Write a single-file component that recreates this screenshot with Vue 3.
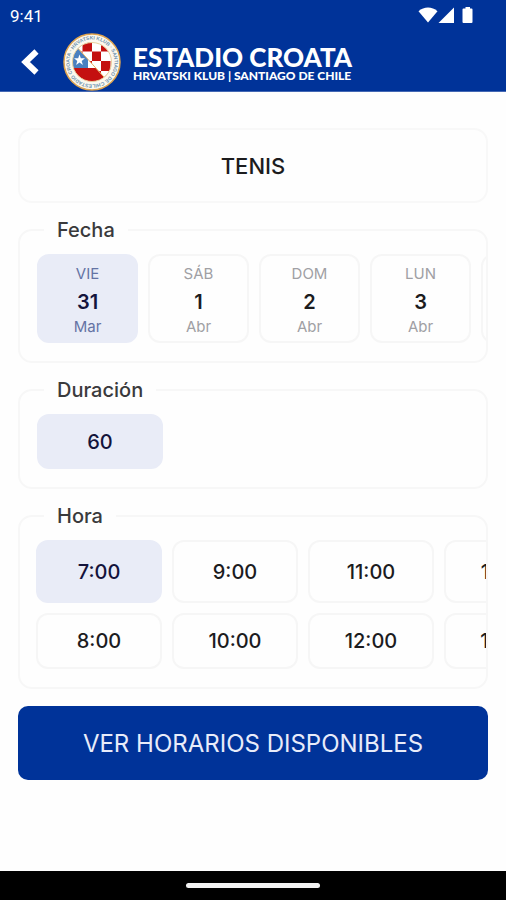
<script setup>
import { ref } from 'vue'

const days = [
  { name: 'VIE', day: '31', month: 'Mar' },
  { name: 'SÁB', day: '1', month: 'Abr' },
  { name: 'DOM', day: '2', month: 'Abr' },
  { name: 'LUN', day: '3', month: 'Abr' },
  { name: 'MAR', day: '4', month: 'Abr' },
]
const durations = ['60']
const hours = ['7:00', '9:00', '11:00', '13:00', '8:00', '10:00', '12:00', '14:00']

const selectedDay = ref('31')
const selectedDuration = ref('60')
const selectedHour = ref('7:00')
</script>

<template>
  <div class="screen">
    <header class="top">
      <div class="status">
        <span class="clock">9:41</span>
        <svg class="status-icons" width="56" height="18" viewBox="0 0 56 18" aria-hidden="true">
          <path d="M.5 4.200C6 -.6 14 -.6 19.500 4.200L10 15.500Z" />
          <path d="M36 .5V16H20.500Z" />
          <path d="M47.500 0h4.500v1.500h1.500q1 0 1 1V15q0 1-1 1h-8q-1 0-1-1V2.500q0-1 1-1h2Z" />
        </svg>
      </div>
      <div class="brand-row">
        <button class="back" type="button" aria-label="Volver">
          <svg width="20" height="28" viewBox="0 0 20 28" aria-hidden="true">
            <path d="M16.500 3.500L5.500 14L16.500 24.500" fill="none" stroke="#fff" stroke-width="6" />
          </svg>
        </button>
        <svg class="crest" width="58" height="58" viewBox="0 0 58 58" aria-hidden="true">
          <defs>
            <clipPath id="disc"><circle cx="29" cy="29" r="19.500" /></clipPath>
            <clipPath id="upper"><path d="M14 6H54V54H50L12 12Z" /></clipPath>
            <path id="ring" d="M29 51.500a22.500 22.500 0 1 1 .1 0" />
          </defs>
          <circle cx="29" cy="29" r="28" fill="#fbf8ee" stroke="#dfa550" stroke-width="1.500" />
          <text class="ring-text"><textPath href="#ring">ESTADIO CROATA · HRVATSKI KLUB · SANTIAGO DE CHILE ·</textPath></text>
          <g clip-path="url(#disc)">
            <rect width="58" height="58" fill="#fff" />
            <path d="M0 35H58V58H0Z" fill="#c41010" />
            <path d="M0 0H25V35H0Z" fill="#4a80c0" />
            <g clip-path="url(#upper)">
              <rect width="58" height="58" fill="#fff" />
              <path d="M19.500 9h9.500v9.500h-9.500zM38 9h9.500v9.500H38zM29 18.500h9v9.500h-9zM10 18.500h9.500v9.500h-9.500zM38 28h9.500v10H38zM19.500 28h9.500v10h-9.500zM29 38h9v9.500h-9z" fill="#c41010" />
            </g>
            <path d="M12 12L50 54" stroke="#e6b566" stroke-width="1" />
            <path d="M16.500 21.500l1.300 3.800h4.200l-3.300 2.600 1.200 4-3.400-2.400-3.400 2.400 1.200-4-3.300-2.600h4.200z" fill="#fff" />
          </g>
          <circle cx="29" cy="29" r="19.500" fill="none" stroke="#e9cf9c" stroke-width="1" />
        </svg>
        <div class="brand">
          <span class="brand-name">ESTADIO CROATA</span>
          <span class="brand-sub">HRVATSKI KLUB | SANTIAGO DE CHILE</span>
        </div>
      </div>
    </header>

    <main class="content">
      <h1 class="sport">TENIS</h1>

      <fieldset class="group">
        <legend>Fecha</legend>
        <div class="scroller days">
          <button
            v-for="d in days"
            :key="d.day"
            type="button"
            class="chip day"
            :class="{ selected: d.day === selectedDay }"
            :aria-pressed="d.day === selectedDay"
            @click="selectedDay = d.day"
          >
            <span class="weekday">{{ d.name }}</span>
            <span class="number">{{ d.day }}</span>
            <span class="month">{{ d.month }}</span>
          </button>
        </div>
      </fieldset>

      <fieldset class="group">
        <legend>Duración</legend>
        <div class="scroller durations">
          <button
            v-for="m in durations"
            :key="m"
            type="button"
            class="chip"
            :class="{ selected: m === selectedDuration }"
            :aria-pressed="m === selectedDuration"
            @click="selectedDuration = m"
          >{{ m }}</button>
        </div>
      </fieldset>

      <fieldset class="group">
        <legend>Hora</legend>
        <div class="scroller hours">
          <button
            v-for="h in hours"
            :key="h"
            type="button"
            class="chip"
            :class="{ selected: h === selectedHour }"
            :aria-pressed="h === selectedHour"
            @click="selectedHour = h"
          >{{ h }}</button>
        </div>
      </fieldset>

      <button class="submit" type="button">VER HORARIOS DISPONIBLES</button>
    </main>

    <footer class="nav-bar"><span class="handle"></span></footer>
  </div>
</template>

<style>
body {
  margin: 0;
  background: #fff;
}
</style>

<style scoped>
* {
  box-sizing: border-box;
}
.screen {
  display: flex;
  flex-direction: column;
  min-height: 100vh;
  background: #fefefe;
  font-family: Inter, "Liberation Sans", sans-serif;
  color: #1c1c1e;
}
button {
  font: inherit;
  color: inherit;
  cursor: pointer;
}
.top {
  background: #003399;
  color: #fff;
  border-bottom: 1px solid #4468b4;
}
.status {
  display: flex;
  justify-content: space-between;
  align-items: center;
  height: 32px;
  padding: 0 32px 0 10px;
}
.clock {
  font-family: Roboto, sans-serif;
  font-size: 17px;
}
.status-icons {
  fill: #fff;
  overflow: visible;
}
.brand-row {
  display: flex;
  align-items: center;
  height: 59px;
  padding-left: 16px;
}
.back {
  display: flex;
  padding: 0 4px;
  border: 0;
  background: none;
}
.crest {
  flex: none;
  margin-left: 19px;
}
.ring-text {
  font-family: "Liberation Sans", sans-serif;
  font-size: 5px;
  font-weight: 700;
  fill: #6d93b0;
}
.brand {
  display: flex;
  flex-direction: column;
  margin-left: 12px;
  padding-top: 2px;
  font-family: Lato, sans-serif;
  font-weight: 900;
  white-space: nowrap;
}
.brand-name {
  font-size: 26px;
  line-height: 26px;
}
.brand-sub {
  font-size: 12px;
  line-height: 12px;
}
.content {
  flex: 1;
  display: flex;
  flex-direction: column;
  gap: 14px;
  padding: 36px 18px 20px;
}
.sport {
  display: flex;
  align-items: center;
  justify-content: center;
  height: 75px;
  margin: 0;
  border: 2px solid #f8f8f8;
  border-radius: 14px;
  font-size: 22px;
  font-weight: 500;
}
.group {
  min-width: 0;
  margin: 0;
  padding: 11px 0 18px;
  border: 2px solid #f7f7f7;
  border-radius: 14px;
}
legend {
  margin-left: 24px;
  padding: 0 13px;
  font-size: 20px;
  line-height: 26px;
  font-weight: 500;
  color: #3a3a3c;
}
.scroller {
  overflow-x: auto;
  scrollbar-width: none;
  padding: 0 17px;
}
.days,
.durations {
  display: flex;
  gap: 10px;
}
.hours {
  display: grid;
  grid-template-rows: 63px 56px;
  grid-template-columns: repeat(4, 126px);
  gap: 10px;
  padding: 0 16px;
}
.chip {
  flex: none;
  padding: 0;
  border: 2px solid #f6f6f6;
  border-radius: 12px;
  background: #fefefe;
  font-size: 20px;
  font-weight: 500;
  text-align: center;
}
.durations .chip {
  width: 126px;
  height: 55px;
}
.chip.selected {
  border-color: #e9ecf7;
  background: #e9ecf7;
  color: #14143c;
}
.day {
  display: flex;
  flex-direction: column;
  align-items: center;
  justify-content: center;
  width: 101px;
  height: 89px;
}
.weekday,
.month {
  font-size: 15px;
  font-weight: 400;
  color: #a0a0a4;
}
.weekday {
  line-height: 28px;
}
.month {
  line-height: 22px;
}
.selected .weekday,
.selected .month {
  color: #6473a4;
}
.number {
  line-height: 28px;
  font-weight: 600;
}
.submit {
  height: 74px;
  margin-top: 3px;
  border: 0;
  border-radius: 10px;
  background: #003399;
  color: #e8ecfa;
  font-size: 24px;
}
.nav-bar {
  display: flex;
  justify-content: center;
  height: 29px;
  padding-top: 12px;
  background: #000;
}
.handle {
  width: 134px;
  height: 5px;
  border-radius: 3px;
  background: #f2f2f2;
}
</style>
